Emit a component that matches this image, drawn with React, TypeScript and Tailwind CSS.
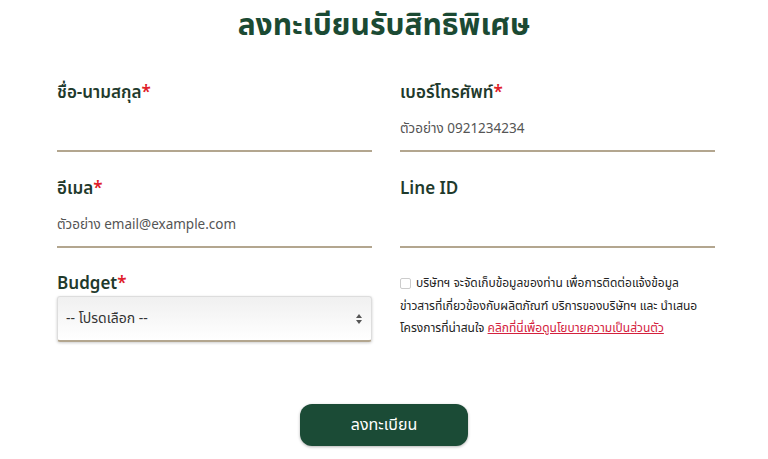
import React from 'react'

const font = { fontFamily: '"Noto Sans Thai", Kanit, "Noto Sans", sans-serif' }

const Label = ({ text, required }: { text: string; required?: boolean }) => (
  <div className="text-[17px] font-semibold text-[#1f3a2c] leading-[24px]">
    {text}
    {required && <span className="text-[#e0202a]">*</span>}
  </div>
)

const Field = ({ label, required, placeholder }: { label: string; required?: boolean; placeholder?: string }) => (
  <div className="flex flex-col">
    <Label text={label} required={required} />
    <div className="h-[47px] pt-[4px] flex items-center border-b-2 border-[#b3a68f]">
      <span className="text-[13.5px] text-[#555]">{placeholder}</span>
    </div>
  </div>
)

export default function App() {
  return (
    <div className="w-[768px] h-[459px] bg-white overflow-hidden" style={font}>
      <h1 className="text-center text-[30px] font-bold text-[#1b4a33] pt-[6px] leading-[40px]">
        ลงทะเบียนรับสิทธิพิเศษ
      </h1>
      <div className="grid grid-cols-2 gap-x-[28px] pl-[57px] pr-[53px] mt-[35px] gap-y-[25px]">
        <Field label="ชื่อ-นามสกุล" required />
        <Field label="เบอร์โทรศัพท์" required placeholder="ตัวอย่าง 0921234234" />
        <Field label="อีเมล" required placeholder="ตัวอย่าง email@example.com" />
        <Field label="Line ID" />
        <div className="flex flex-col -mt-[1px]">
          <Label text="Budget" required />
          <div className="h-[46px] rounded-[3px] border border-[#ddd] border-b-2 border-b-[#b3a68f] bg-gradient-to-b from-[#f0f0f0] to-white shadow-[0_1px_3px_rgba(0,0,0,0.2)] flex items-center justify-between px-[8px]">
            <span className="text-[14px] text-[#333]">-- โปรดเลือก --</span>
            <svg width="8" height="12" viewBox="0 0 8 12">
              <path d="M4 1 L7 5 H1 Z" fill="#555" />
              <path d="M4 11 L7 7 H1 Z" fill="#555" />
            </svg>
          </div>
        </div>
        <div className="text-[12px] leading-[22.5px] text-[#222] -mt-[1px]">
          <span className="inline-block w-[11px] h-[11px] border border-[#ccc] rounded-[2px] mr-[5px] align-middle" />
          บริษัทฯ จะจัดเก็บข้อมูลของท่าน เพื่อการติดต่อแจ้งข้อมูล ข่าวสารที่เกี่ยวข้องกับผลิตภัณฑ์ บริการของบริษัทฯ และ นำเสนอ
          โครงการที่น่าสนใจ{' '}
          <a className="text-[#d4213d] underline">คลิกที่นี่เพื่อดูนโยบายความเป็นส่วนตัว</a>
        </div>
      </div>
      <div className="flex justify-center mt-[62px]">
        <button className="w-[168px] h-[42px] rounded-[12px] bg-[#1b4b36] text-white text-[16px] shadow-[0_1px_3px_rgba(0,0,0,0.3)]">
          ลงทะเบียน
        </button>
      </div>
    </div>
  )
}
